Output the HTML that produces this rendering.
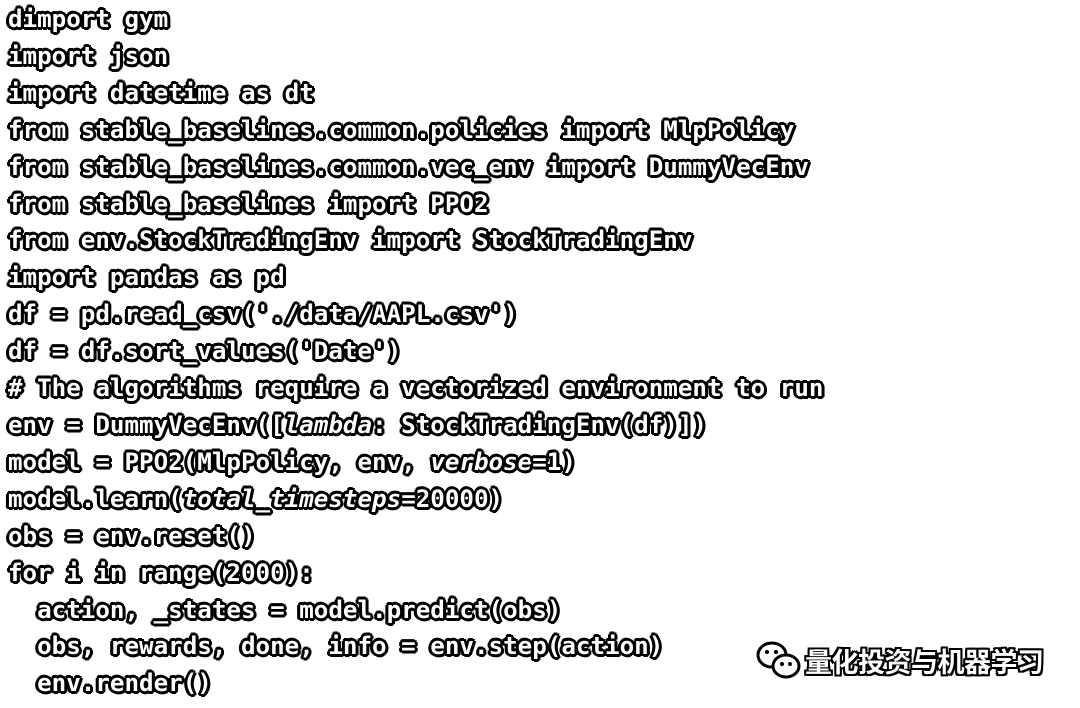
<!DOCTYPE html>
<html><head><meta charset="utf-8"><style>
body{margin:0;width:1080px;height:708px;background:#fff;overflow:hidden;position:relative}
pre{margin:0;position:absolute;left:8px;top:1px;font-family:"DejaVu Sans Mono",monospace;font-weight:bold;font-size:24.2px;line-height:36.9px;color:#fff;
text-shadow:2px 0 #000,-2px 0 #000,0 2px #000,0 -2px #000,2px 2px #000,-2px -2px #000,2px -2px #000,-2px 2px #000,3px 0 #000,-3px 0 #000,0 3px #000,0 -3px #000,3px 1px #000,-3px 1px #000,1px 3px #000,-1px -3px #000}
i{font-style:italic}
.wm{position:absolute;left:805px;top:641px;font-family:"Liberation Sans","Noto Sans CJK SC",sans-serif;font-weight:bold;font-size:27px;color:#fff;letter-spacing:-0.5px;
text-shadow:2px 0 #000,-2px 0 #000,0 2px #000,0 -2px #000,2px 2px #000,-2px -2px #000,2px -2px #000,-2px 2px #000}
svg{position:absolute;left:755px;top:640px}
</style></head><body>
<pre>dimport gym
import json
import datetime as dt
from stable_baselines.common.policies import MlpPolicy
from stable_baselines.common.vec_env import DummyVecEnv
from stable_baselines import PPO2
from env.StockTradingEnv import StockTradingEnv
import pandas as pd
df = pd.read_csv('./data/AAPL.csv')
df = df.sort_values('Date')
# The algorithms require a vectorized environment to run
env = DummyVecEnv([<i>lambda</i>: StockTradingEnv(df)])
model = PPO2(MlpPolicy, env, <i>verbose</i>=1)
model.learn(<i>total_timesteps</i>=20000)
obs = env.reset()
for i in range(2000):
  action, _states = model.predict(obs)
  obs, rewards, done, info = env.step(action)
  env.render()</pre>
<svg width="50" height="42" viewBox="0 0 50 42"><ellipse cx="17" cy="15" rx="14" ry="12" fill="#fff" stroke="#000" stroke-width="3"/><ellipse cx="31" cy="26" rx="13" ry="11" fill="#fff" stroke="#000" stroke-width="3"/><circle cx="12" cy="12" r="2" fill="#000"/><circle cx="21" cy="12" r="2" fill="#000"/><circle cx="27" cy="24" r="2" fill="#000"/><circle cx="35" cy="24" r="2" fill="#000"/></svg>
<div class="wm">量化投资与机器学习</div>
</body></html>
